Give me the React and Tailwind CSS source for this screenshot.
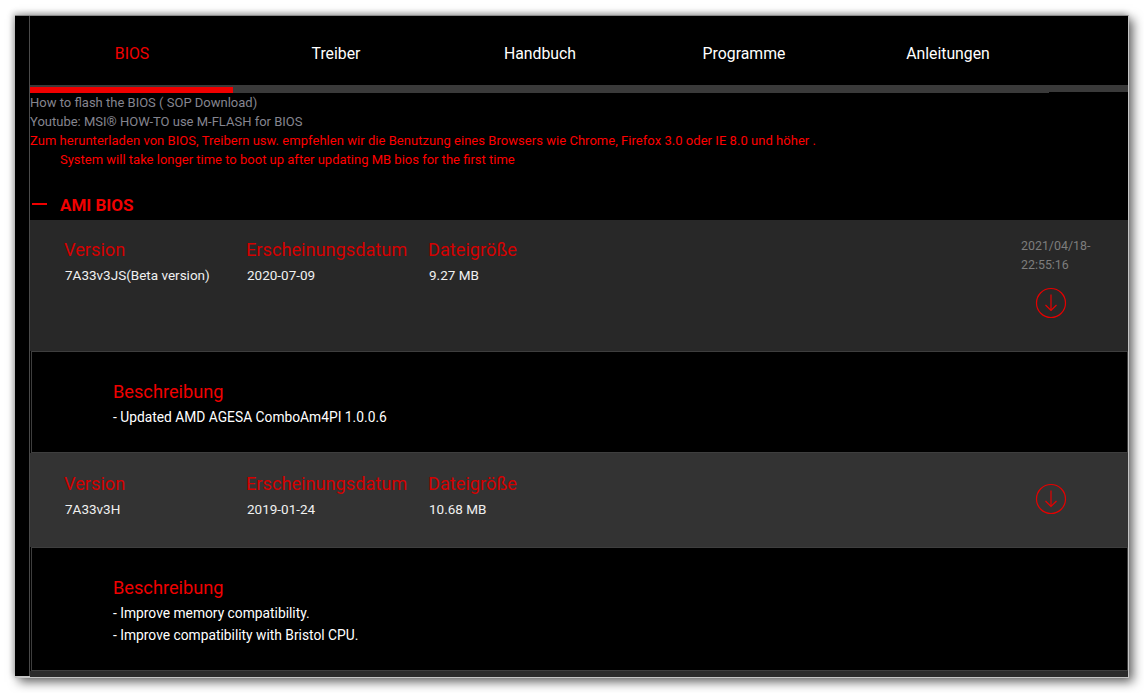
const font = "font-['Roboto',sans-serif]";

const tabs = ["BIOS", "Treiber", "Handbuch", "Programme", "Anleitungen"];

function DownloadIcon() {
  return (
    <svg width="32" height="32" viewBox="0 0 32 32" fill="none" stroke="#e60000" strokeWidth="1.2">
      <circle cx="16" cy="16" r="14.5" />
      <path d="M16 7.5V23.5" />
      <path d="M10.5 18L16 23.5L21.5 18" />
    </svg>
  );
}

function BiosRow({ version, date, size, stamp, className }) {
  return (
    <div className={`flex pl-[35px] ${className}`}>
      <div className="w-[182px]">
        <p className="-ml-[1px] text-[18.2px] leading-[24px] text-[#d40000]">Version</p>
        <p className="mt-[1px] text-[13.5px] leading-[24px] text-[#f0f0f0]">{version}</p>
      </div>
      <div className="w-[182px]">
        <p className="-ml-[1px] text-[18.2px] leading-[24px] text-[#d40000]">Erscheinungsdatum</p>
        <p className="mt-[1px] text-[13.5px] leading-[24px] text-[#f0f0f0]">{date}</p>
      </div>
      <div className="w-[182px]">
        <p className="-ml-[1px] text-[18.2px] leading-[24px] text-[#d40000]">Dateigröße</p>
        <p className="mt-[1px] text-[13.5px] leading-[24px] text-[#f0f0f0]">{size}</p>
      </div>
      <div className="ml-auto flex w-[107px] flex-col items-start">
        {stamp && <p className="-mt-[2px] w-[76px] text-[12.4px] leading-[19px] text-[#7d7d7d]">{stamp}</p>}
        <div className={`ml-[14px] ${stamp ? "mt-[13px]" : "mt-[11px]"}`}>
          <DownloadIcon />
        </div>
      </div>
    </div>
  );
}

function Details({ lines, className }) {
  return (
    <div className={`ml-[1px] border border-[#3e3e3e] bg-black pl-[81px] ${className}`}>
      <p className="text-[18.2px] leading-[24px] text-[#f00000]">Beschreibung</p>
      <div className="mt-[3px]">
        {lines.map((line) => (
          <p key={line} className="mt-[1px] text-[13.8px] leading-[21px] text-white">{line}</p>
        ))}
      </div>
    </div>
  );
}

export default function App() {
  return (
    <div className={`h-[693px] w-[1144px] overflow-hidden bg-white pl-[15px] pt-[15px] ${font}`}>
      <div className="h-[663px] w-[1114px] border-t border-t-[#8a8a8a] border-r border-r-[#c4c4c4] border-b-2 border-b-[#c4c4c4] bg-black pl-[14px] shadow-[4px_4px_10px_rgba(0,0,0,0.6),-2px_-2px_6px_rgba(0,0,0,0.25)]">
        <div className="h-full border-l border-l-[#4a4a4a]">
          <nav className="flex h-[69px] items-center pt-[6px]">
            {tabs.map((tab, i) => (
              <span key={tab} className={`w-[204px] text-center text-[15.8px] ${i === 0 ? "text-[#f00000]" : "text-white"}`}>
                {tab}
              </span>
            ))}
          </nav>
          <div className="h-[7px] bg-[#3a3a3a] pt-[2px]">
            <div className="h-[6px] w-[1019px] bg-[#3a3a3a]">
              <div className="h-full w-[203px] bg-[#f00000]" />
            </div>
          </div>
          <div className="pt-[1px] text-[13px] leading-[19px]">
            <p className="text-[#85858f]">How to flash the BIOS ( SOP Download)</p>
            <p className="text-[#85858f]">Youtube: MSI® HOW-TO use M-FLASH for BIOS</p>
            <p className="tracking-[0.04px] text-[#ff0000]">Zum herunterladen von BIOS, Treibern usw. empfehlen wir die Benutzung eines Browsers wie Chrome, Firefox 3.0 oder IE 8.0 und höher .</p>
            <p className="pl-[30px] text-[#ff0000]">System will take longer time to boot up after updating MB bios for the first time</p>
          </div>
          <div className="flex h-[51px] items-center pt-[20px]">
            <span className="ml-[2px] h-[2px] w-[15px] -translate-y-[1px] bg-[#f00000]" />
            <span className="ml-[13px] translate-y-[1px] text-[17px] font-bold text-[#f00000]">AMI BIOS</span>
          </div>
          <BiosRow
            className="h-[131px] bg-[#282828] pt-[18px]"
            version="7A33v3JS(Beta version)"
            date="2020-07-09"
            size="9.27 MB"
            stamp="2021/04/18-22:55:16"
          />
          <Details className="h-[102px] pt-[28px]" lines={["- Updated AMD AGESA ComboAm4PI 1.0.0.6"]} />
          <BiosRow
            className="h-[94px] bg-[#333333] pt-[19px]"
            version="7A33v3H"
            date="2019-01-24"
            size="10.68 MB"
          />
          <Details
            className="h-[124px] pt-[28px]"
            lines={["- Improve memory compatibility.", "- Improve compatibility with Bristol CPU."]}
          />
          <div className="h-[6px] bg-[#2a2a2a]" />
        </div>
      </div>
    </div>
  );
}
